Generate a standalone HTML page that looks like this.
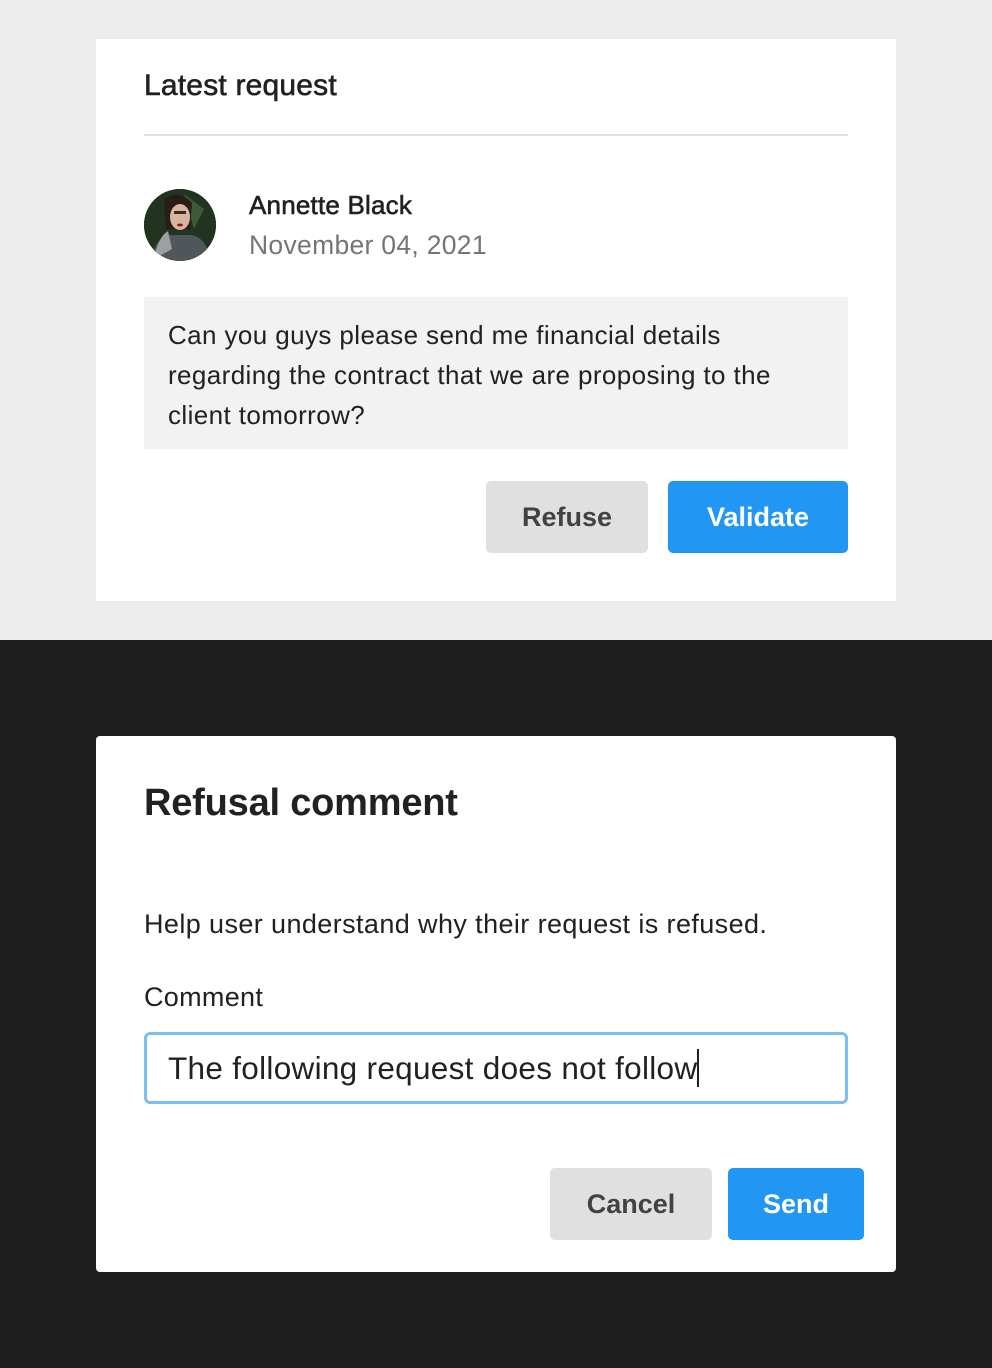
<!DOCTYPE html>
<html><head><meta charset="utf-8"><style>
*{margin:0;padding:0;box-sizing:border-box}
body{width:992px;height:1368px;position:relative;font-family:"Liberation Sans",Arial,sans-serif;color:#212121;background:#1f1f1f;overflow:hidden}
.top{position:absolute;left:0;top:0;width:992px;height:640px;background:#ececec}
.a{position:absolute;white-space:nowrap}
.m{-webkit-text-stroke:0.6px #212121}
.btn{position:absolute;border-radius:5px;display:flex;align-items:center;justify-content:center;font-weight:bold;font-size:27px}
</style></head><body>
<div class="top"></div>
<div class="a" style="left:96px;top:39px;width:800px;height:562px;background:#fff"></div>
<div class="a m" style="left:144px;top:69px;font-size:30px;letter-spacing:0.2px">Latest request</div>
<div class="a" style="left:144px;top:134px;width:704px;height:2px;background:#e0e0e0"></div>
<div class="a" style="left:144px;top:189px;width:72px;height:72px;border-radius:50%;overflow:hidden;background:#233a26">
<svg width="72" height="72" viewBox="0 0 72 72"><rect width="72" height="72" fill="#20341f"/><path d="M40 5 L60 20 L50 40Z" fill="#3c5a36"/><path d="M20 10 Q36 0 48 14 L46 40 L22 40Z" fill="#2a1d16"/><ellipse cx="36" cy="28" rx="10" ry="13" fill="#d9b4a0"/><rect x="30" y="22" width="12" height="3" fill="#3a2a22"/><ellipse cx="36" cy="36" rx="3" ry="1.5" fill="#8a1a20"/><path d="M8 72 Q10 50 24 46 L48 46 Q64 50 66 72Z" fill="#50565a"/><path d="M10 70 Q14 48 24 42 L28 60 Z" fill="#9da0a2"/></svg></div>
<div class="a m" style="left:249px;top:190px;font-size:26px;letter-spacing:0.2px;color:#212121">Annette Black</div>
<div class="a" style="left:249px;top:230px;font-size:26.5px;letter-spacing:0.3px;color:#757575">November 04, 2021</div>
<div class="a" style="left:144px;top:297px;width:704px;height:152px;background:#f2f2f2"></div>
<div class="a" style="left:168px;top:315px;font-size:26px;letter-spacing:0.4px;line-height:40px;color:#212121">Can you guys please send me financial details<br>regarding the contract that we are proposing to the<br>client tomorrow?</div>
<div class="btn" style="left:486px;top:481px;width:162px;height:72px;background:#e0e0e0;color:#424242">Refuse</div>
<div class="btn" style="left:668px;top:481px;width:180px;height:72px;background:#2196f3;color:#fff">Validate</div>

<div class="a" style="left:96px;top:736px;width:800px;height:536px;background:#fff;border-radius:4px"></div>
<div class="a" style="left:144px;top:782px;font-size:38px;font-weight:bold;letter-spacing:-0.2px">Refusal comment</div>
<div class="a" style="left:144px;top:909px;font-size:27px;letter-spacing:0.4px">Help user understand why their request is refused.</div>
<div class="a" style="left:144px;top:982px;font-size:27px;letter-spacing:0.3px">Comment</div>
<div class="a" style="left:144px;top:1032px;width:704px;height:72px;border:3px solid #7bbff2;border-radius:6px"></div>
<div class="a" style="left:168px;top:1049px;font-size:31.5px;letter-spacing:0.3px">The following request does not follow<span style="display:inline-block;width:2px;height:38px;background:#212121;vertical-align:-8px"></span></div>
<div class="btn" style="left:550px;top:1168px;width:162px;height:72px;background:#e0e0e0;color:#424242">Cancel</div>
<div class="btn" style="left:728px;top:1168px;width:136px;height:72px;background:#2196f3;color:#fff">Send</div>
</body></html>
